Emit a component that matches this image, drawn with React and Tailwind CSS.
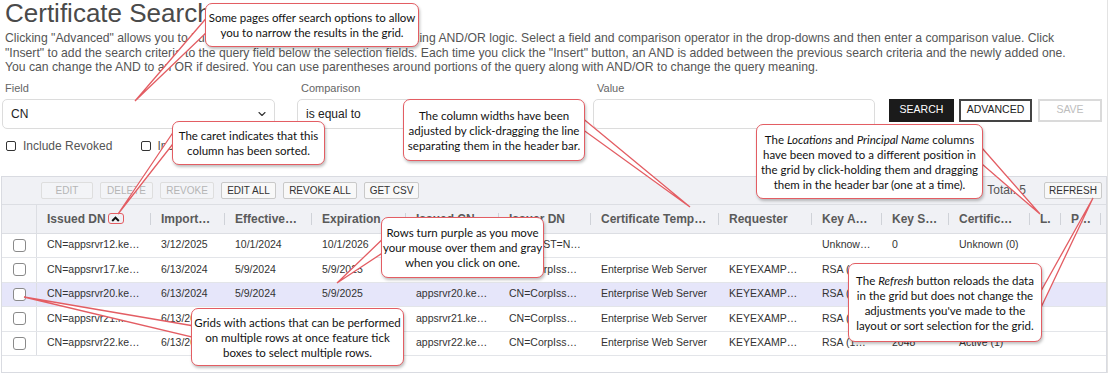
import { ChevronDown } from "lucide-react";

const cols = "grid grid-cols-[35px_114px_74px_87px_94px_93px_92px_128px_93px_70px_67px_81px_31px_40px_1fr]";

const headers = [
  "Issued DN",
  "Import…",
  "Effective…",
  "Expiration",
  "Issued CN",
  "Issuer DN",
  "Certificate Temp…",
  "Requester",
  "Key A…",
  "Key S…",
  "Certific…",
  "L.",
  "P…",
];

const rows = [
  ["CN=appsrvr12.ke…", "3/12/2025", "10/1/2024", "10/1/2026", "appsrvr12.ke…", "C=US, ST=N…", "", "", "Unknow…", "0", "Unknown (0)", "", ""],
  ["CN=appsrvr17.ke…", "6/13/2024", "5/9/2024", "5/9/2025", "appsrvr17.ke…", "CN=CorpIss…", "Enterprise Web Server", "KEYEXAMP…", "RSA (1…", "2048", "Active (1)", "", ""],
  ["CN=appsrvr20.ke…", "6/13/2024", "5/9/2024", "5/9/2025", "appsrvr20.ke…", "CN=CorpIss…", "Enterprise Web Server", "KEYEXAMP…", "RSA (1…", "2048", "Active (1)", "", ""],
  ["CN=appsrvr21.ke…", "6/13/2024", "5/9/2024", "5/9/2025", "appsrvr21.ke…", "CN=CorpIss…", "Enterprise Web Server", "KEYEXAMP…", "RSA (1…", "2048", "Active (1)", "", ""],
  ["CN=appsrvr22.ke…", "6/13/2024", "5/9/2024", "5/9/2025", "appsrvr22.ke…", "CN=CorpIss…", "Enterprise Web Server", "KEYEXAMP…", "RSA (1…", "2048", "Active (1)", "", ""],
];

const wedges = [
  "209,15 135,101 209,30",
  "176,128 118,214 176,140",
  "575,112 690,207 575,124",
  "975,140 1040,214 975,158",
  "390,232 337,283 390,248",
  "200,327 24,297 200,339",
  "1036,300 1093,198 1036,318",
];

function GridButton({ children, disabled, className = "" }) {
  return (
    <button
      className={
        "h-[17px] shrink-0 flex items-center justify-center whitespace-nowrap text-[10px] border rounded-[2px] " +
        (disabled ? "text-[#b5b5b5] border-[#dedede] bg-[#f3f4f7] " : "text-[#333] border-[#c9c9c9] bg-[#f8f8f8] ") +
        className
      }
    >
      {children}
    </button>
  );
}

function Callout({ className, children }) {
  return (
    <div
      className={
        "absolute flex items-center justify-center text-center whitespace-nowrap bg-white border-[1.5px] border-[#e35d63] rounded-[7px] shadow-[1px_2px_3px_rgba(0,0,0,0.25)] font-['Lato',sans-serif] text-[11.5px] leading-[15px] text-[#111] " +
        className
      }
    >
      <div>{children}</div>
    </div>
  );
}

export default function App() {
  return (
    <div className="relative w-[1108px] h-[373px] overflow-hidden bg-white border-r border-[#e3e3e3] font-['Liberation_Sans',Arial,sans-serif] text-[#333]">
      <div className="px-[5px]">
        <h1 className="h-[26px] text-[26px] leading-[26px] font-normal text-[#4a4a4a]">Certificate Search</h1>
        <p className="mt-[5px] text-[12.2px] leading-[14.5px] text-[#555] whitespace-nowrap">
          Clicking "Advanced" allows you to build complex custom search queries utilizing AND/OR logic. Select a field and comparison operator in the drop-downs and then enter a comparison value. Click
          <br />
          "Insert" to add the search criteria to the query field below the selection fields. Each time you click the "Insert" button, an AND is added between the previous search criteria and the newly added one.
          <br />
          You can change the AND to an OR if desired. You can use parentheses around portions of the query along with AND/OR to change the query meaning.
        </p>
      </div>

      <div className="mt-[7px] px-[2px] flex items-start">
        <div className="w-[273px]">
          <div className="h-[17px] pl-[3px] text-[11px] leading-[13px] text-[#666]">Field</div>
          <div className="h-[30px] flex items-center justify-between pl-[8px] pr-[6px] border border-[#dcdcdc] rounded-[5px] text-[12px] text-[#222]">
            CN
            <ChevronDown size={12} strokeWidth={2.2} className="text-[#333]" />
          </div>
        </div>
        <div className="w-[273px] ml-[22px]">
          <div className="h-[17px] pl-[4px] text-[11px] leading-[13px] text-[#666]">Comparison</div>
          <div className="h-[30px] flex items-center justify-between pl-[8px] pr-[6px] border border-[#dcdcdc] rounded-[5px] text-[12px] text-[#222]">
            is equal to
            <ChevronDown size={12} strokeWidth={2.2} className="text-[#333]" />
          </div>
        </div>
        <div className="w-[282px] ml-[23px]">
          <div className="h-[17px] pl-[4px] text-[11px] leading-[13px] text-[#666]">Value</div>
          <div className="h-[30px] border border-[#dcdcdc] rounded-[5px]" />
        </div>
        <div className="mt-[17px] ml-[14px] flex gap-[5px] text-[10.5px]">
          <button className="h-[23px] w-[65px] bg-[#1b1b1b] text-white">SEARCH</button>
          <button className="h-[23px] w-[73px] border-2 border-[#444] text-[#222]">ADVANCED</button>
          <button className="h-[23px] w-[64px] ml-[1px] border-2 border-[#dadada] text-[#bdbdbd]">SAVE</button>
        </div>
      </div>

      <div className="mt-[9px] h-[16px] pl-[6px] flex items-center text-[12px] text-[#555]">
        <span className="w-[10px] h-[10px] border-[1.3px] border-[#333] rounded-[2px]" />
        <span className="ml-[7px]">Include Revoked</span>
        <span className="ml-[29px] w-[10px] h-[10px] border-[1.3px] border-[#333] rounded-[2px]" />
        <span className="ml-[6px]">Include Expired</span>
      </div>

      <div className="mt-[22px] ml-[1px] w-[1106px] h-[197px] border border-[#d9dbe1]">
        <div className="h-[28px] flex items-center pl-[39px] pr-[4px] gap-[7px] bg-[#f0f1f5] border-b border-[#dcdee3]">
          <GridButton disabled className="w-[52px]">EDIT</GridButton>
          <GridButton disabled className="w-[53px]">DELETE</GridButton>
          <GridButton disabled className="w-[54px]">REVOKE</GridButton>
          <GridButton className="w-[55px]">EDIT ALL</GridButton>
          <GridButton className="w-[74px]">REVOKE ALL</GridButton>
          <GridButton className="w-[55px]">GET CSV</GridButton>
          <span className="ml-auto text-[12px] text-[#555] whitespace-nowrap">Total: 5</span>
          <GridButton className="w-[58px] ml-[11px] text-[10.5px]">REFRESH</GridButton>
        </div>

        <div className={cols + " h-[29px] bg-[#f0f1f5] border-b border-[#dcdee3] text-[12px] font-bold text-[#5a5a5a]"}>
          <div className="border-r border-[#dcdee3]" />
          {headers.map((h, i) => (
            <div key={h} className="flex items-center justify-between pl-[10px] overflow-hidden">
              <span className="flex items-center whitespace-nowrap overflow-hidden">
                {h}
                {i === 0 && (
                  <span className="ml-[2px] w-[16px] h-[11px] flex items-center justify-center border-[1.3px] border-[#e35d63] rounded-[3px]">
                    <svg width="9" height="6" viewBox="0 0 9 6">
                      <path d="M1.2 5 L4.5 1.6 L7.8 5" fill="none" stroke="#111" strokeWidth="2" />
                    </svg>
                  </span>
                )}
              </span>
              <span className="w-px h-[12px] shrink-0 bg-[#cfd2d8]" />
            </div>
          ))}
          <div />
        </div>

        {rows.map((r, ri) => (
          <div
            key={ri}
            className={cols + " h-[24.5px] border-b border-[#e3e5e9] text-[10.5px] text-[#333] " + (ri === 2 ? "bg-[#e6e6fa]" : "bg-white")}
          >
            <div className="flex items-center justify-center border-r border-[#dcdee3]">
              <span className="w-[13px] h-[13px] bg-white border border-[#8a8a8a] rounded-[3px]" />
            </div>
            {r.map((c, ci) => (
              <div key={ci} className="flex items-center pl-[10px] whitespace-nowrap overflow-hidden">
                {c}
              </div>
            ))}
            <div />
          </div>
        ))}
      </div>

      <svg className="absolute left-0 top-0 pointer-events-none" width="1108" height="373">
        {wedges.map((p) => (
          <polygon key={p} points={p} fill="white" stroke="#e35d63" strokeWidth="1.3" />
        ))}
      </svg>

      <Callout className="left-[205px] top-[3px] w-[214px] h-[44px]">
        Some pages offer search options to allow
        <br />
        you to narrow the results in the grid.
      </Callout>
      <Callout className="left-[172px] top-[121px] w-[153px] h-[44px]">
        The caret indicates that this
        <br />
        column has been sorted.
      </Callout>
      <Callout className="left-[403px] top-[99px] w-[182px] h-[62px]">
        The column widths have been
        <br />
        adjusted by click-dragging the line
        <br />
        separating them in the header bar.
      </Callout>
      <Callout className="left-[756px] top-[124px] w-[227px] h-[75px]">
        The <i>Locations</i> and <i>Principal Name</i> columns
        <br />
        have been moved to a different position in
        <br />
        the grid by click-holding them and dragging
        <br />
        them in the header bar (one at a time).
      </Callout>
      <Callout className="left-[381px] top-[217px] w-[163px] h-[61px]">
        Rows turn purple as you move
        <br />
        your mouse over them and gray
        <br />
        when you click on one.
      </Callout>
      <Callout className="left-[191px] top-[308px] w-[213px] h-[58px]">
        Grids with actions that can be performed
        <br />
        on multiple rows at once feature tick
        <br />
        boxes to select multiple rows.
      </Callout>
      <Callout className="left-[848px] top-[263px] w-[194px] h-[79px]">
        The <i>Refresh</i> button reloads the data
        <br />
        in the grid but does not change the
        <br />
        adjustments you've made to the
        <br />
        layout or sort selection for the grid.
      </Callout>
    </div>
  );
}
